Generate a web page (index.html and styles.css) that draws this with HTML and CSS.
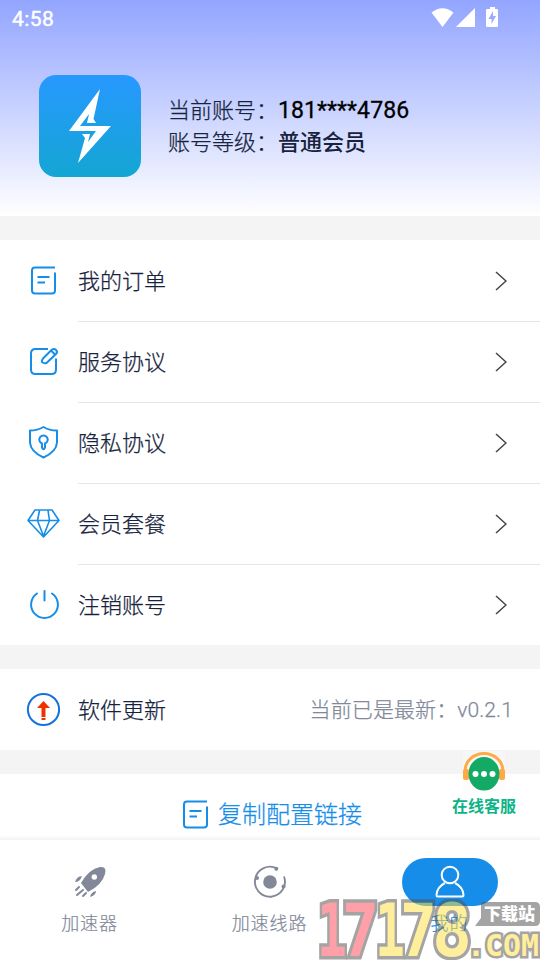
FILE: index.html
```
<!DOCTYPE html>
<html lang="zh-CN">
<head>
<meta charset="utf-8">
<title>我的</title>
<link rel="stylesheet" href="styles.css">
</head>
<body>
<div class="app">
  <header class="hero">
    <div class="status">
      <span>4:58</span>
      <svg width="68" height="22" viewBox="0 0 68 22" fill="#fff"><path d="M0.5 5.500Q11.500-3 22.500 5.500L11.500 20Z"/><path d="M44 1V20H25Z"/><path fill-rule="evenodd" d="M56 2H59V0H64V2H66Q67 2 67 3V19Q67 20 66 20H56Q55 20 55 19V3Q55 2 56 2ZM62 4L57.500 12H60.500V17L65 9H62Z" /></svg>
    </div>
    <div class="profile">
      <svg class="logo" width="102" height="102" viewBox="0 0 102 102"><defs><linearGradient id="lg" x2="0" y2="1"><stop stop-color="#2798ff"/><stop offset="1" stop-color="#14a6d3"/></linearGradient></defs><rect width="102" height="102" rx="17" fill="url(#lg)"/><path fill="#fff" d="M61 14L30 56H57L49 67L51 59H43L46 63L39 88L72 51H41L50 39L48 48H57L54.500 44Z"/></svg>
      <div class="account">
        <div>当前账号：<b class="phone">181****4786</b></div>
        <div>账号等级：<b>普通会员</b></div>
      </div>
    </div>
  </header>

  <main>
    <section class="menu">
      <div class="row"><svg class="icon" viewBox="0 0 36 36"><path d="M30 5.500H10Q7 5.500 7 8.500V28.500Q7 31.500 10 31.500H27Q30 31.500 30 28.500V10.500M12.500 15H24.500M12.500 20.500H20"/></svg><div class="cell"><span>我的订单</span><svg class="chevron" viewBox="0 0 12 20"><path d="M1 1L11 10L1 19"/></svg></div></div>
      <div class="row"><svg class="icon" viewBox="0 0 36 36"><path d="M23 6H10.500Q6 6 6 10.500V26.500Q6 31 10.500 31H26.500Q31 31 31 26.500V15.500"/><path d="M18 15.500L26.500 7Q29 5 31 7T31 11L21.500 20Q19 20.500 17.500 19.500T18 15.500ZM26.500 8L30 11.500"/></svg><div class="cell"><span>服务协议</span><svg class="chevron" viewBox="0 0 12 20"><path d="M1 1L11 10L1 19"/></svg></div></div>
      <div class="row"><svg class="icon" viewBox="0 0 36 36"><path d="M18.500 3Q24 6.500 32 6.500V18.500Q31.500 27.500 18.500 33.500Q5.500 27.500 5 18.500V6.500Q12.500 6.500 18.500 3Z"/><path d="M17 19.500A4.200 4.200 0 1 1 20 19.500V23.500Q18.500 27 17 23.500Z"/></svg><div class="cell"><span>隐私协议</span><svg class="chevron" viewBox="0 0 12 20"><path d="M1 1L11 10L1 19"/></svg></div></div>
      <div class="row"><svg class="icon thin" viewBox="0 0 36 36"><path d="M10 5H27L34 15.500L18.500 32L3 15.500ZM3 15.500H34M14.500 5.500L12.500 15.500L18.500 31L24.500 15.500L23 5.500"/></svg><div class="cell"><span>会员套餐</span><svg class="chevron" viewBox="0 0 12 20"><path d="M1 1L11 10L1 19"/></svg></div></div>
      <div class="row"><svg class="icon" viewBox="0 0 36 36"><path d="M12 7.500A13.400 13.400 0 1 0 27 7.500M19.500 5V14.500" stroke-linecap="round"/></svg><div class="cell last"><span>注销账号</span><svg class="chevron" viewBox="0 0 12 20"><path d="M1 1L11 10L1 19"/></svg></div></div>
    </section>

    <section class="row update"><svg class="icon" viewBox="0 0 36 36"><circle cx="18.500" cy="18.500" r="15.600" stroke="#1471de"/><path d="M18.500 10L25 17H20.500V26H16.500V17H12ZM16.500 27H20.500V29H16.500Z" fill="#ef3100" stroke="none"/></svg><div class="cell last"><span>软件更新</span><span class="version">当前已是最新：v0.2.1</span></div></section>

    <section class="copy"><svg class="icon" viewBox="0 0 36 36"><path d="M30 5.500H10Q7 5.500 7 8.500V28.500Q7 31.500 10 31.500H27Q30 31.500 30 28.500V10.500M12.500 15H24.500M12.500 20.500H20"/></svg><span>复制配置链接</span></section>
  </main>

  <nav class="tabs">
    <div class="tab"><div class="pill"><svg width="34" height="34" viewBox="0 0 34 34"><path fill="#828899" fill-rule="evenodd" d="M8 18Q16 4 27 2Q34 1 32 9Q29 20 15 27ZM24 12A2.700 2.700 0 1 0 18.600 12A2.700 2.700 0 1 0 24 12Z"/><path fill="#828899" d="M2 17Q4 11 9 11Q7 17 2 17ZM17 32Q18 27 23 26Q23 30 17 32Z"/><path d="M3 25L6 22M4 30L10 25M10 31L13 28" stroke="#828899" stroke-width="2" stroke-linecap="round"/></svg></div><span>加速器</span></div>
    <div class="tab"><div class="pill"><svg width="34" height="34" viewBox="0 0 34 34" fill="none" stroke="#828899" stroke-width="1.900"><circle cx="17" cy="17" r="6.800" fill="#828899" stroke="none"/><path d="M24 3.500A15 15 0 1 0 31 11.500"/><g fill="#828899" stroke="none"><circle cx="23.300" cy="3.800" r="2"/><circle cx="4" cy="13" r="2"/><circle cx="30.500" cy="21.500" r="2"/></g></svg></div><span>加速线路</span></div>
    <div class="tab active"><div class="pill"><svg width="34" height="34" viewBox="0 0 34 34" fill="none" stroke="#fff" stroke-width="2"><circle cx="17" cy="10" r="8.300"/><path d="M12 18Q4 22 3.500 30Q3.500 31.500 4.500 31.500H29.500Q30.500 31.500 30.500 30Q30 22 22 18"/></svg></div><span>我的</span></div>
  </nav>

  <div class="service">
    <svg width="42" height="42" viewBox="0 0 42 42"><path fill="#fafafa" fill-opacity=".5" d="M0 0H42V42H0Z"/><path d="M2 22V20A19 17.500 0 0 1 40 20V22" fill="none" stroke="#ffaa47" stroke-width="3"/><rect y="18" width="6" height="11" rx="2" fill="#ffaa47"/><rect x="36" y="18" width="6" height="11" rx="2" fill="#ffaa47"/><ellipse cx="21" cy="22.800" rx="15.500" ry="16.800" fill="#13aa65"/><g fill="#fff"><circle cx="12.500" cy="23" r="3"/><circle cx="21" cy="23" r="3"/><circle cx="29.500" cy="23" r="3"/></g></svg>
    <span>在线客服</span>
  </div>

  <svg class="mark" width="225" height="61" viewBox="0 0 225 61">
    <g class="digits">
      <text class="red" x="2" y="57" textLength="30" lengthAdjust="spacingAndGlyphs">1</text>
      <text class="red" x="27" y="57" textLength="37" lengthAdjust="spacingAndGlyphs">7</text>
      <text class="yellow" x="60" y="57" textLength="30" lengthAdjust="spacingAndGlyphs">1</text>
      <text class="yellow" x="85" y="57" textLength="37" lengthAdjust="spacingAndGlyphs">7</text>
      <text class="yellow" x="117" y="57" textLength="40" lengthAdjust="spacingAndGlyphs">8</text>
    </g>
    <text class="com" x="152" y="57" textLength="72" lengthAdjust="spacingAndGlyphs">.COM</text>
    <path fill="#555" d="M168 3H220Q225 3 225 8V22Q225 27 220 27H160L166 19V5Q166 3 168 3Z"/>
    <text class="site" x="169" y="21">下载站</text>
  </svg>
</div>
</body>
</html>
```
FILE: styles.css
```
* { box-sizing: border-box; }
body { margin: 0; font-family: Roboto, "Noto Sans CJK SC", sans-serif; color: #17233d; background: #f4f4f4; }
svg { display: block; flex: none; }
.app { position: relative; width: 540px; height: 960px; overflow: hidden; display: flex; flex-direction: column; }
.hero { height: 216px; flex: none; background: linear-gradient(#92a5ff, #fff); }
.status { height: 38px; padding: 0 41px 0 12px; display: flex; align-items: center; justify-content: space-between; color: #fff; font-size: 21px; letter-spacing: .4px; -webkit-text-stroke: .4px #fff; }
.status svg { margin-top: -3px; }
.profile { display: flex; padding: 37px 0 0 39px; }
.account { margin: 20px 0 0 27px; font-size: 22px; font-weight: 300; line-height: 32px; white-space: nowrap; -webkit-text-stroke: .25px currentColor; }
.account b { font-weight: 500; -webkit-text-stroke: 0; }
.account .phone { color: #000; font-size: 23px; line-height: 30px; font-weight: 400; letter-spacing: .1px; -webkit-text-stroke: .3px #000; }
main { display: flex; flex-direction: column; gap: 24px; padding-top: 24px; height: 624px; flex: none; }
.menu { background: #fff; }
.row { display: flex; align-items: center; height: 81px; padding-left: 25px; background: #fff; }
.icon { width: 36px; height: 36px; margin-top: -1px; fill: none; stroke: #168ee9; stroke-width: 2; stroke-linejoin: round; }
.thin { stroke-width: 1.6; }
.cell { flex: 1; height: 82px; margin-left: 17px; padding-right: 33px; display: flex; align-items: center; justify-content: space-between; border-bottom: 1px solid #e6e6e6; font-size: 22px; font-weight: 300; -webkit-text-stroke: .25px currentColor; }
.cell span { padding-bottom: 2px; }
.last { border-color: transparent; }
.chevron { width: 12px; height: 20px; margin-top: 2px; fill: none; stroke: #444; stroke-width: 1.5; }
.update .cell { padding-right: 27px; }
.cell .version { font-size: 21px; color: #828899; letter-spacing: .1px; }
.copy { height: 66px; background: linear-gradient(#fff 61px, #f3f3f3 66px); display: flex; justify-content: center; padding: 23px 1px 0 0; gap: 5px; font-size: 24px; font-weight: 300; line-height: 36px; color: #168ee9; -webkit-text-stroke: .25px currentColor; }
.tabs { display: grid; grid-template-columns: repeat(3, 180px); height: 120px; padding-top: 18px; background: #fff; }
.tab { display: flex; flex-direction: column; align-items: center; color: #828899; font-size: 18px; font-weight: 300; line-height: 36px; letter-spacing: .9px; -webkit-text-stroke: .2px currentColor; }
.tab span { margin-right: 1px; }
.pill { width: 96px; height: 48px; border-radius: 24px; display: grid; place-items: center; }
.active .pill { background: #168ee9; }
.active { color: #168ee9; }
.service { position: absolute; left: 448px; top: 751px; width: 72px; display: flex; flex-direction: column; align-items: center; color: #0cb487; font-size: 16px; font-weight: 700; line-height: 27px; }
.mark { position: absolute; left: 315px; top: 899px; opacity: .53; }
.mark text { paint-order: stroke; stroke: #555; stroke-linejoin: miter; }
.digits { font: bold 73px "DejaVu Sans Mono", monospace; stroke-width: 7px; }
.red { fill: #ff4b5c; }
.yellow, .com { fill: #ffdf43; }
.com { font: bold 30px "DejaVu Sans Mono", monospace; stroke-width: 5px; }
.mark .site { font: 900 17px "Noto Sans CJK SC", sans-serif; fill: #fff; stroke: none; }
```
